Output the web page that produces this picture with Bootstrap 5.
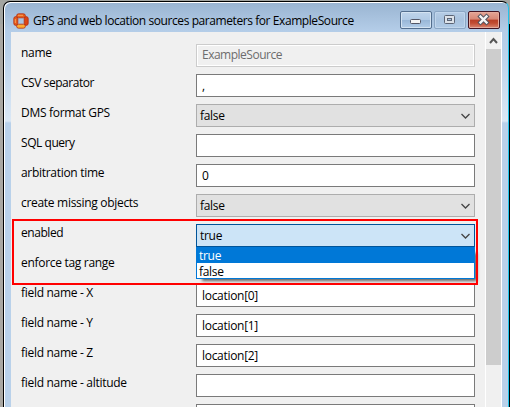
<!DOCTYPE html>
<html lang="en">
<head>
<meta charset="utf-8">
<title>GPS and web location sources parameters</title>
<link href="https://cdn.jsdelivr.net/npm/bootstrap@5.3.0/dist/css/bootstrap.min.css" rel="stylesheet">
<style>
body{height:407px;background:linear-gradient(90deg,#a9a7a2 0 50%,#000 50%);font:12px/16px "Open Sans","Noto Sans",sans-serif;color:#000;letter-spacing:-.3px}
.desk-top{height:24px;background:#a3a5a1}
.win{margin-left:3px;width:506px;height:420px;margin-top:1px;border:1px solid #000;border-right-color:#20c5ec;border-radius:7px 7px 0 0;background:linear-gradient(#99b4d1 0,#b4cde8 29px,#b9d1ea 48px,#dbe8f5 119px,#b9d1ea 121px);box-shadow:inset 1px 1px #fff}
.title-bar{height:30px;padding:0 8px 0 9px}
.title-text{margin-left:4px;margin-top:7px;letter-spacing:-.42px}
.wbtn{width:32px;height:18px;border:1px solid #536e8e;border-radius:2px;background:linear-gradient(#bfd4ea 0,#b1cae5 48%,#98b6d7 50%,#b2cde9);box-shadow:inset 0 0 0 1px #d4e3f2;margin-top:6px}
.wbtn.max{border-color:#8ba6c4;background:linear-gradient(#b6cde6,#a9c3df 50%,#afcae6);box-shadow:inset 0 0 0 1px #c1d6ec}
.wbtn.close-win{border-color:#431422;background:linear-gradient(#e5a596 0,#d78775 45%,#b83f27 50%,#c24c32 70%,#d98772);box-shadow:inset 0 0 0 1px #e5ab9d}
.client{margin:0 7px 0 7px;height:380px;background:#f0f0f0}
.form-pane{width:474px;padding:12px 10px 0 10px}
.prow{height:23px;margin-bottom:7px}
.plabel{width:175px;height:16px;padding-top:1px}
.tight{letter-spacing:-.45px}
.fld{width:279px;height:23px;border:1px solid #7a7a7a;background:#fff;padding:3px 5px 0 5px}
.fld.ro{border-color:#ccc;background:#f0f0f0;box-shadow:inset 0 0 0 1px #fff;color:#6d6d6d;padding-top:2px;letter-spacing:-.5px}
.fld.sel{background:#e1e1e1;border-color:#adadad;padding-left:3px;padding-right:4px}
.fld.sel.open{background:#cce4f7;border-color:#005499}
.opts{top:23px;left:0;width:279px;height:32px;border:1px solid #0078d7;border-top:0;background:#fff;z-index:2;box-shadow:4px 4px 3px -2px rgba(0,0,0,.6)}
.opt{height:16px;line-height:17px;padding-left:2px}
.opt.on{background:#0078d7;color:#fff}
.scroll{width:17px;border-left:1px solid #fff;border-right:1px solid #fff}
.thumb{height:316px;background:#cdcdcd}
.marker{left:12px;top:219px;width:466px;height:66px;border:2px solid #f00;z-index:3}
</style>
<script src="https://cdn.jsdelivr.net/npm/bootstrap@5.3.0/dist/js/bootstrap.bundle.min.js"></script>
</head>
<body class="overflow-hidden position-relative">
<div class="desk-top position-absolute top-0 start-0 w-100"></div>
<div class="d-flex position-relative overflow-hidden">
<main class="win flex-shrink-0">
  <header class="title-bar d-flex align-items-center">
    <svg class="mt-2" width="16" height="16" viewBox="0 0 16 16"><g stroke="#b42c10" stroke-width=".8"><rect x=".8" y="3.6" width="4" height="8.8" rx="2" fill="#e45a1a"/><rect x="11.2" y="3.6" width="4" height="8.8" rx="2" fill="#dc4515"/><rect x="3.6" y=".8" width="8.8" height="4" rx="2" fill="#e86019"/><rect x="3.6" y="11.2" width="8.8" height="4" rx="2" fill="#ffac30"/></g><path d="M5 2.3h5M2.3 6v4" stroke="#f6a05a"/></svg>
    <span class="title-text text-nowrap">GPS and web location sources parameters for ExampleSource</span>
    <div class="d-flex ms-auto" style="gap:2px">
      <div class="wbtn"><svg class="d-block" width="30" height="16"><rect x="9.5" y="7.5" width="10" height="4" rx="1" fill="#f4f4f4" stroke="#535666"/></svg></div>
      <div class="wbtn max"><svg class="d-block" width="30" height="16"><rect x="9.5" y="3.5" width="10" height="8" rx="1" fill="#dce2e9" stroke="#5b6475"/><rect x="12.5" y="6.5" width="4" height="2" fill="#a9c3df" stroke="#5b6475"/></svg></div>
      <div class="wbtn close-win"><svg class="d-block" width="30" height="16"><path d="M11.5 4.500l6 6M17.500 4.500l-6 6" stroke="#53545f" stroke-width="4.400" stroke-linecap="square"/><path d="M11.500 4.500l6 6M17.500 4.500l-6 6" stroke="#f5f5f5" stroke-width="2.400" stroke-linecap="square"/></svg></div>
    </div>
  </header>
  <div class="client d-flex">
    <div class="form-pane">
      <div class="prow d-flex"><div class="plabel">name</div><div class="fld ro">ExampleSource</div></div>
      <div class="prow d-flex"><div class="plabel tight">CSV separator</div><div class="fld">,</div></div>
      <div class="prow d-flex"><div class="plabel">DMS format GPS</div><div class="fld sel d-flex justify-content-between">false<svg width="9" height="16" fill="none" stroke="#444" stroke-width="1.3"><path d="M.5 6l4 4 4-4"/></svg></div></div>
      <div class="prow d-flex"><div class="plabel tight">SQL query</div><div class="fld"></div></div>
      <div class="prow d-flex"><div class="plabel">arbitration time</div><div class="fld">0</div></div>
      <div class="prow d-flex"><div class="plabel">create missing objects</div><div class="fld sel d-flex justify-content-between">false<svg width="9" height="16" fill="none" stroke="#444" stroke-width="1.3"><path d="M.5 6l4 4 4-4"/></svg></div></div>
      <div class="prow d-flex"><div class="plabel tight">enabled</div><div class="position-relative"><div class="fld sel open d-flex justify-content-between">true<svg width="9" height="16" fill="none" stroke="#444" stroke-width="1.3"><path d="M.5 6l4 4 4-4"/></svg></div><div class="opts position-absolute"><div class="opt on">true</div><div class="opt">false</div></div></div></div>
      <div class="prow d-flex"><div class="plabel">enforce tag range</div><div class="fld"></div></div>
      <div class="prow d-flex"><div class="plabel">field name - X</div><div class="fld">location[0]</div></div>
      <div class="prow d-flex"><div class="plabel">field name - Y</div><div class="fld">location[1]</div></div>
      <div class="prow d-flex"><div class="plabel">field name - Z</div><div class="fld">location[2]</div></div>
      <div class="prow d-flex"><div class="plabel">field name - altitude</div><div class="fld"></div></div>
      <div class="prow d-flex"><div class="plabel"></div><div class="fld"></div></div>
    </div>
    <div class="scroll"><svg class="d-block" width="15" height="17" fill="none" stroke="#555" stroke-width="2"><path d="M4 11l3.500-4 3.500 4"/></svg><div class="thumb"></div></div>
  </div>
</main>
<div class="marker position-absolute"></div>
</div>
</body>
</html>
